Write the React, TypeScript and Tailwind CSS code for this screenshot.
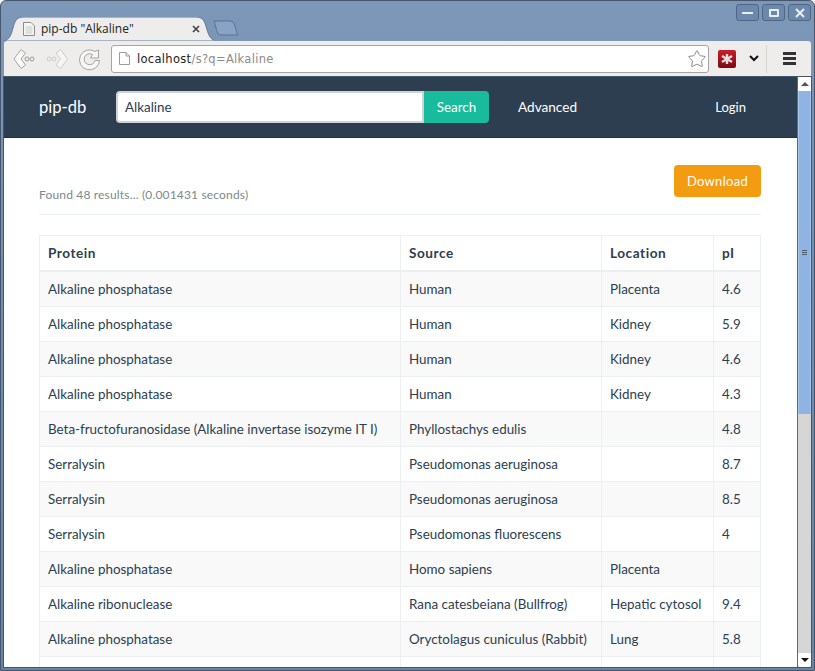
import { Star } from "lucide-react";

const rows = [
  ["Alkaline phosphatase", "Human", "Placenta", "4.6"],
  ["Alkaline phosphatase", "Human", "Kidney", "5.9"],
  ["Alkaline phosphatase", "Human", "Kidney", "4.6"],
  ["Alkaline phosphatase", "Human", "Kidney", "4.3"],
  ["Beta-fructofuranosidase (Alkaline invertase isozyme IT I)", "Phyllostachys edulis", "", "4.8"],
  ["Serralysin", "Pseudomonas aeruginosa", "", "8.7"],
  ["Serralysin", "Pseudomonas aeruginosa", "", "8.5"],
  ["Serralysin", "Pseudomonas fluorescens", "", "4"],
  ["Alkaline phosphatase", "Homo sapiens", "Placenta", ""],
  ["Alkaline ribonuclease", "Rana catesbeiana (Bullfrog)", "Hepatic cytosol", "9.4"],
  ["Alkaline phosphatase", "Oryctolagus cuniculus (Rabbit)", "Lung", "5.8"],
  ["", "", "", ""],
];

function WindowButton({ children }: { children: React.ReactNode }) {
  return (
    <div className="w-[23px] h-[17px] rounded-[3px] border border-[#4f6785] bg-[#6c89ad] flex items-center justify-center">
      {children}
    </div>
  );
}

function TitleBar() {
  return (
    <div className="relative h-[40px] shrink-0 flex items-end">
      <div className="relative w-[210px] h-[24px] flex items-center pl-[18px]">
        <svg className="absolute left-0 top-0" width="210" height="24" viewBox="0 0 210 24">
          <path d="M0 24 C6 22 7 18 9 11 C11 3 13 0 20 0 H192 C198 0 200 3 202 9 C204 17 206 22 211 24 Z" fill="#eeedeb" stroke="#5f7a9c" />
        </svg>
        <svg className="relative" width="14" height="16" viewBox="0 0 14 16">
          <path d="M1.5 1.5 H9 L12.5 5 V14.5 H1.5 Z" fill="#f6f6f4" stroke="#8b8b88" />
          <path d="M3.5 6 H10.5 M3.5 8 H10.5 M3.5 10 H10.5 M3.5 12 H10.5" stroke="#c9c9c6" />
        </svg>
        <span className="relative ml-[5px] text-[12px] text-[#222] font-['Open_Sans',sans-serif]">pip-db "Alkaline"</span>
        <svg className="absolute left-[187px] top-[7px]" width="10" height="10" viewBox="0 0 10 10">
          <path d="M2 2 L8 8 M8 2 L2 8" stroke="#444" strokeWidth="1.7" />
        </svg>
      </div>
      <svg className="mb-[5px] -ml-[1px]" width="26" height="16" viewBox="0 0 26 16">
        <path d="M1 1 H17 C20 1 21 3 22 6 C23 10 24 14 25 15 H8 C5 15 4 12 3 8 C2 5 2 2 1 1 Z" fill="#88a3c5" stroke="#56728f" />
      </svg>
      <div className="absolute right-0 top-[3px] flex gap-[3px]">
        <WindowButton><div className="w-[11px] h-[2px] bg-[#e8eef5]" /></WindowButton>
        <WindowButton><div className="w-[10px] h-[8px] border-2 border-[#e8eef5] rounded-[1px]" /></WindowButton>
        <WindowButton>
          <svg width="10" height="10" viewBox="0 0 10 10"><path d="M1 1 L9 9 M9 1 L1 9" stroke="#e8eef5" strokeWidth="2" /></svg>
        </WindowButton>
      </div>
    </div>
  );
}

function Toolbar() {
  return (
    <div className="h-[36px] shrink-0 bg-[#eeedeb] rounded-t-[3px] border-b border-[#b9b9b6] flex items-center pl-[9px] pr-[12px]">
      <svg width="24" height="24" viewBox="0 0 24 24" className="shrink-0">
        <path d="M8 2.5 L1 12 L8 21.5 L12.5 18 L8 12 L12.5 6 Z" fill="#fbfbfa" stroke="#a3a3a0" strokeLinejoin="round" />
        <circle cx="14" cy="12" r="2" fill="none" stroke="#9a9a97" />
        <circle cx="19" cy="12" r="2" fill="none" stroke="#9a9a97" />
      </svg>
      <svg width="24" height="24" viewBox="0 0 24 24" className="shrink-0 ml-[9px]">
        <circle cx="3" cy="12" r="2" fill="none" stroke="#cdcdca" />
        <circle cx="8" cy="12" r="2" fill="none" stroke="#cdcdca" />
        <path d="M14.5 2.5 L21.5 12 L14.5 21.5 L10 18 L14.5 12 L10 6 Z" fill="#f5f5f3" stroke="#cdcdca" strokeLinejoin="round" />
      </svg>
      <svg width="24" height="24" viewBox="0 0 24 24" className="shrink-0 ml-[8px]">
        <path d="M17 4.5 A10 10 0 1 0 21.5 13.5 L17 13.5 A5.5 5.5 0 1 1 14.5 7.5 L12.5 11 L20.5 11 L20.5 3 Z" fill="#f7f7f5" stroke="#a3a3a0" strokeLinejoin="round" />
      </svg>
      <div className="ml-[9px] w-[598px] h-[28px] shrink-0 bg-white border border-[#a4a4a2] rounded-[3px] flex items-center pl-[6px] pr-[1px]">
        <svg width="13" height="15" viewBox="0 0 13 15" className="shrink-0">
          <path d="M1.5 1.5 H8 L11.5 5 V13.5 H1.5 Z M8 1.5 V5 H11.5" fill="#fff" stroke="#9c9c9a" />
        </svg>
        <span className="ml-[6px] text-[13px] tracking-[0.35px] font-['DejaVu_Sans',sans-serif] text-[#222] scale-x-[0.885] origin-left">
          localhost<span className="text-[#8b8b8b]">/s?q=Alkaline</span>
        </span>
        <Star className="ml-auto text-[#8a8a88]" size={20} strokeWidth={1.2} />
      </div>
      <div className="ml-[9px] w-[18px] h-[18px] rounded-[2px] bg-gradient-to-b from-[#c81e2b] to-[#7c0a12] flex items-center justify-center shrink-0">
        <svg width="14" height="12" viewBox="0 0 14 12">
          <path d="M7 1 V11 M2 3 L12 9 M12 3 L2 9" stroke="#e9dcdc" strokeWidth="2.4" />
        </svg>
      </div>
      <svg width="10" height="7" viewBox="0 0 10 7" className="ml-[13px] shrink-0">
        <path d="M1 1 L5 5 L9 1" fill="none" stroke="#111" strokeWidth="2" />
      </svg>
      <div className="ml-[7px] w-px h-[28px] bg-[#d6d6d3] shrink-0" />
      <div className="ml-[16px] w-[13px] flex flex-col gap-[2px] shrink-0">
        <div className="h-[3px] bg-[#333]" />
        <div className="h-[3px] bg-[#333]" />
        <div className="h-[3px] bg-[#333]" />
      </div>
    </div>
  );
}

function Navbar() {
  return (
    <div className="h-[61px] shrink-0 bg-[#2c3e50] shadow-[inset_0_-1px_0_#233240] flex items-center pl-[35px] pr-[51px] text-white">
      <span className="w-[77px] text-[16.6px] leading-none">pip-db</span>
      <div className="flex h-[32px] mb-px">
        <div className="w-[308px] bg-white border-2 border-[#ccd3da] rounded-l-[4px] flex items-center pl-[7px] text-[13.4px] text-[#2c3e50]">
          Alkaline
        </div>
        <div className="w-[65px] bg-[#18bc9c] rounded-r-[4px] flex items-center justify-center text-[13.4px]">Search</div>
      </div>
      <span className="ml-[29px] text-[13.6px]">Advanced</span>
      <span className="ml-auto text-[13px]">Login</span>
    </div>
  );
}

function ResultsTable() {
  return (
    <table className="w-[721px] table-fixed border-collapse border border-[#ecf0f1] text-[13.4px] text-[#2c3e50]">
      <colgroup>
        <col className="w-[361px]" />
        <col className="w-[201px]" />
        <col className="w-[112px]" />
        <col className="w-[47px]" />
      </colgroup>
      <thead>
        <tr className="h-[35px] border-b-2 border-[#ecf0f1]">
          {["Protein", "Source", "Location", "pI"].map((h) => (
            <th key={h} className="border-l border-[#ecf0f1] pl-2 pt-[1px] text-left text-[13.6px] font-bold tracking-[0.55px]">{h}</th>
          ))}
        </tr>
      </thead>
      <tbody>
        {rows.map((r, i) => (
          <tr key={i} className={`${i === 0 ? "h-[36px]" : "h-[35px]"} border-t border-[#ecf0f1] ${i % 2 === 0 ? "bg-[#f9f9f9]" : "bg-white"}`}>
            {r.map((c, j) => (
              <td key={j} className="border-l border-[#ecf0f1] pl-2 whitespace-nowrap">{c}</td>
            ))}
          </tr>
        ))}
      </tbody>
    </table>
  );
}

function Scrollbar() {
  return (
    <div className="w-[14px] shrink-0 flex flex-col bg-[#d6d6d4] border-l border-[#5a6a80]">
      <div className="h-[14px] bg-white flex items-center justify-center">
        <div className="w-0 h-0 border-x-[4px] border-x-transparent border-b-[4px] border-b-[#555]" />
      </div>
      <div className="h-[323px] bg-[#8fb3e3] border-x border-[#a9c6ec] flex items-center justify-center">
        <div className="w-[5px] flex flex-col gap-[1px]">
          <div className="h-px bg-[#4d5a6c]" />
          <div className="h-px bg-[#4d5a6c]" />
          <div className="h-px bg-[#4d5a6c]" />
        </div>
      </div>
      <div className="flex-1" />
      <div className="h-[14px] bg-white rounded-b-[3px] flex items-center justify-center">
        <div className="w-0 h-0 border-x-[4px] border-x-transparent border-t-[4px] border-t-[#111]" />
      </div>
    </div>
  );
}

export default function App() {
  return (
    <div className="w-[815px] h-[671px] overflow-hidden flex flex-col border border-[#46566b] rounded-t-[6px] bg-gradient-to-b from-[#7d97b8] to-[#6484ab] px-[3px] pb-[3px] font-['Lato',sans-serif]">
      <div className="flex flex-col shrink-0">
        <TitleBar />
        <Toolbar />
      </div>
      <div className="flex-1 min-h-0 flex shadow-[0_0_0_1px_#44566d]">
        <div className="flex-1 min-w-0 bg-white flex flex-col overflow-hidden">
          <Navbar />
          <div className="pl-[35px] pr-[36px]">
            <div className="flex items-end justify-between pt-[27px] pb-[11px] border-b border-[#ecf0f1]">
              <span className="text-[12px] tracking-[0.17px] text-[#7b8a8b] relative top-px">Found 48 results... (0.001431 seconds)</span>
              <div className="w-[87px] h-[32px] mb-[6px] pt-[2px] bg-[#f39c12] rounded-[4px] flex items-center justify-center text-[13px] text-white tracking-[0.3px]">Download</div>
            </div>
            <div className="mt-[20px]">
              <ResultsTable />
            </div>
          </div>
        </div>
        <Scrollbar />
      </div>
    </div>
  );
}
